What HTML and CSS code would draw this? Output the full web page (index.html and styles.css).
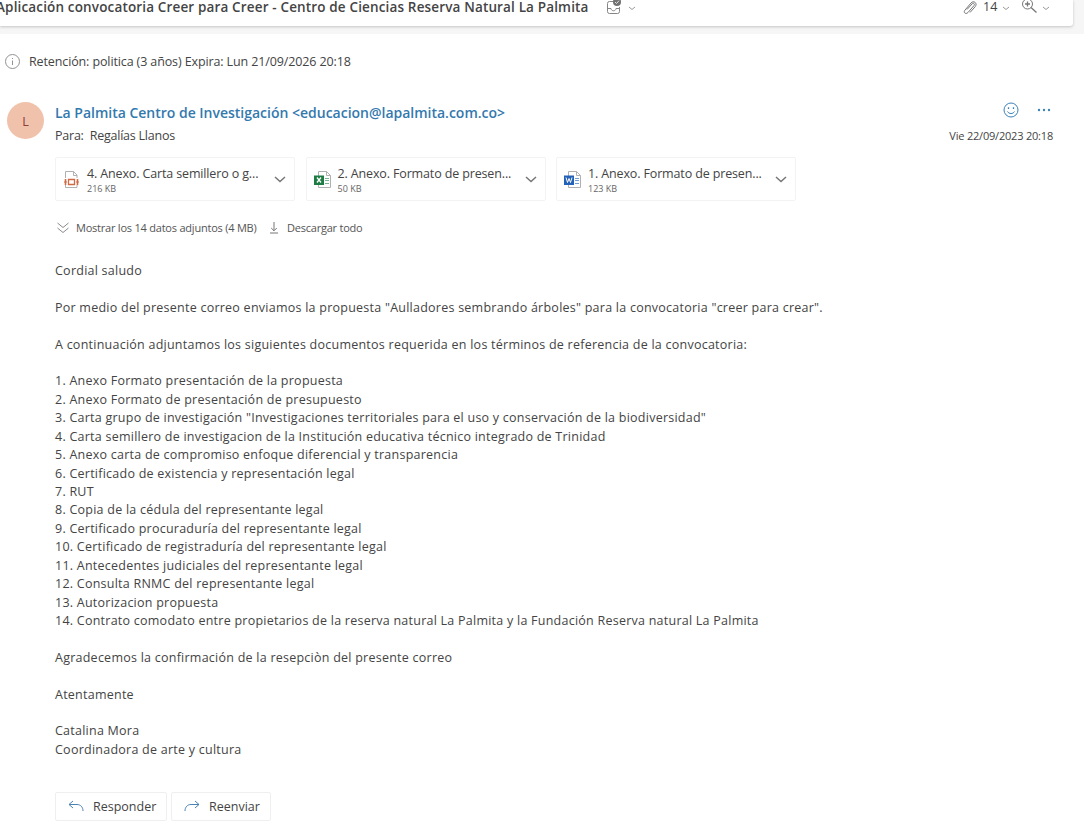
FILE: index.html
```html
<!DOCTYPE html>
<html lang="es">
<head>
    <meta charset="UTF-8">
    <meta name="viewport" content="width=device-width, initial-scale=1.0">
    <title>Aplicación convocatoria Creer para Creer</title>
    <link rel="stylesheet" href="styles.css">
</head>
<body>

    <header class="subject-bar">
        <h1 class="subject">Aplicación convocatoria Creer para Creer - Centro de Ciencias Reserva Natural La Palmita</h1>
        <svg class="inbox" width="16" height="18" viewBox="0 0 16 18" fill="none" stroke="#858585">
            <path d="M7 3.5H3.5a2 2 0 0 0-2 2v8a2 2 0 0 0 2 2h8a2 2 0 0 0 2-2V9M1.5 10.5h3.500c.3 3 4.700 3 5 0h3.500"/>
            <circle cx="11" cy="4" r="4" fill="#707070" stroke="none"/>
            <path d="M9 4l1.500 1.500L13 2.700" stroke="#ddd"/>
        </svg>
        <svg class="chev" width="8" height="5" viewBox="0 0 8 5"><path d="M1 1l3 2.500L7 1"/></svg>
        <div class="tools">
            <svg width="14" height="16" viewBox="0 0 14 16" fill="none" stroke="#777">
                <path d="M4 9.500l5-5.500c1.500-1.600 3.200 0 2 1.500l-6 7c-2 2.200-5 .2-3.200-2.200L8 3c2.700-3 6.800.2 4.300 3.500L7 12.500"/>
            </svg>
            <span class="count">14</span>
            <svg class="chev" width="8" height="5" viewBox="0 0 8 5"><path d="M1 1l3 2.500L7 1"/></svg>
            <svg class="zoom" width="17" height="16" viewBox="0 0 17 16" fill="none" stroke="#777">
                <circle cx="6.500" cy="6" r="5"/>
                <path d="M4 6h5M6.500 3.500v5M10 9.500l5.500 5" stroke-width="1.300"/>
            </svg>
            <svg class="chev" width="8" height="5" viewBox="0 0 8 5"><path d="M1 1l3 2.500L7 1"/></svg>
        </div>
    </header>

    <main class="message">
        <div class="retention">
            <svg width="16" height="16" viewBox="0 0 16 16" fill="none" stroke="#929292">
                <circle cx="7.500" cy="7.500" r="7"/>
                <path d="M7.500 6.500v4.500M7.500 4v1"/>
            </svg>
            <span>Retención: politica (3 años) Expira: Lun 21/09/2026 20:18</span>
        </div>

        <section class="sender">
            <div class="avatar">L</div>
            <div class="who">
                <h2 class="from">La Palmita Centro de Investigación &lt;educacion@lapalmita.com.co&gt;</h2>
                <p class="to">Para:&nbsp; Regalías Llanos</p>
            </div>
            <div class="meta">
                <div class="actions">
                    <svg width="16" height="16" viewBox="0 0 16 16" fill="none" stroke="#3d83b8">
                        <circle cx="8" cy="8" r="7"/>
                        <path d="M4.500 9.500c1.500 2.700 5.500 2.700 7 0"/>
                        <path d="M5.500 5.200v1.800M10.500 5.200v1.800" stroke-width="1.300"/>
                    </svg>
                    <svg width="14" height="4" viewBox="0 0 14 4" fill="#3d83b8">
                        <circle cx="2" cy="2" r="1.200"/><circle cx="7" cy="2" r="1.200"/><circle cx="12" cy="2" r="1.200"/>
                    </svg>
                </div>
                <p class="date">Vie 22/09/2023 20:18</p>
            </div>
        </section>

        <div class="files">
            <div class="file">
                <svg width="18" height="20" viewBox="0 0 18 20" fill="none">
                    <path d="M2.500 9V2.500h8l3.500 3.500v3M10.500 2.500v4h3.500M2.500 16v2.500h11.500V16" stroke="#b0b0b0"/>
                    <path d="M2.500 10v6M14.500 10v6" stroke="#cf6a45" stroke-width="1.600"/>
                    <path d="M5.500 10.500h6v5h-6z" stroke="#cf6a45" stroke-width="1.300"/>
                    <path d="M1 13h3M13 13h3" stroke="#cf6a45"/>
                </svg>
                <div class="file-text">
                    <p class="name">4. Anexo. Carta semillero o g...</p>
                    <p class="size">216 KB</p>
                </div>
                <svg class="down" width="14" height="9" viewBox="0 0 14 9"><path d="M2 2l5 4.500L12 2"/></svg>
            </div>
            <div class="file">
                <svg width="18" height="20" viewBox="0 0 18 20" fill="none">
                    <path d="M4.500 2.500h8l4 4v12h-12zM12.500 2.500v4h4" stroke="#b0b0b0"/>
                    <path d="M11 9.500h4M11 11.500h4M11 14.500h4" stroke="#74b68d"/>
                    <rect x="0" y="6.500" width="10" height="9.500" fill="#1d7c43"/>
                    <path d="M3 8.500l4 5M7 8.500l-4 5" stroke="#fff" stroke-width="1.300"/>
                </svg>
                <div class="file-text">
                    <p class="name">2. Anexo. Formato de presen...</p>
                    <p class="size">50 KB</p>
                </div>
                <svg class="down" width="14" height="9" viewBox="0 0 14 9"><path d="M2 2l5 4.500L12 2"/></svg>
            </div>
            <div class="file">
                <svg width="18" height="20" viewBox="0 0 18 20" fill="none">
                    <path d="M4.500 2.500h8l4 4v12h-12zM12.500 2.500v4h4" stroke="#b0b0b0"/>
                    <path d="M11 9.500h4M11 11.500h4M11 14.500h4" stroke="#6f9fd8"/>
                    <rect x="0" y="6.500" width="10" height="9.500" fill="#2461b8"/>
                    <path d="M2 8.500l1.500 5L5 9.500l1.500 4 1.500-5" stroke="#fff"/>
                </svg>
                <div class="file-text">
                    <p class="name">1. Anexo. Formato de presen...</p>
                    <p class="size">123 KB</p>
                </div>
                <svg class="down" width="14" height="9" viewBox="0 0 14 9"><path d="M2 2l5 4.500L12 2"/></svg>
            </div>
        </div>

        <div class="file-links">
            <svg width="12" height="12" viewBox="0 0 12 12" fill="none" stroke="#8a8a8a"><path d="M.5 1L6 5.500 11.500 1M.5 6L6 10.500 11.500 6"/></svg>
            <span class="show-all">Mostrar los 14 datos adjuntos (4 MB)</span>
            <svg width="8" height="12" viewBox="0 0 8 12" fill="none" stroke="#777"><path d="M4 0v8.500M1.200 6L4 8.800 6.800 6M0 11h8"/></svg>
            <span class="download">Descargar todo</span>
        </div>

        <article class="content">
            <p>Cordial saludo</p>
            <p>Por medio del presente correo enviamos la propuesta "Aulladores sembrando árboles" para la convocatoria "creer para crear".</p>
            <p>A continuación adjuntamos los siguientes documentos requerida en los términos de referencia de la convocatoria:</p>
            <p>
                1. Anexo Formato presentación de la propuesta<br>
                2. Anexo Formato de presentación de presupuesto<br>
                3. Carta grupo de investigación "Investigaciones territoriales para el uso y conservación de la biodiversidad"<br>
                4. Carta semillero de investigacion de la Institución educativa técnico integrado de Trinidad<br>
                5. Anexo carta de compromiso enfoque diferencial y transparencia<br>
                6. Certificado de existencia y representación legal<br>
                7. RUT<br>
                8. Copia de la cédula del representante legal<br>
                9. Certificado procuraduría del representante legal<br>
                10. Certificado de registraduría del representante legal<br>
                11. Antecedentes judiciales del representante legal<br>
                12. Consulta RNMC del representante legal<br>
                13. Autorizacion propuesta<br>
                14. Contrato comodato entre propietarios de la reserva natural La Palmita y la Fundación Reserva natural La Palmita
            </p>
            <p>Agradecemos la confirmación de la resepciòn del presente correo</p>
            <p>Atentamente</p>
            <p>
                Catalina Mora<br>
                Coordinadora de arte y cultura
            </p>
        </article>

        <div class="buttons">
            <button class="btn">
                <svg width="16" height="12" viewBox="0 0 16 12"><path d="M5 1L1 4.500 5 8M1 4.500h8c3.500 0 6 2.500 6 6.500"/></svg>
                Responder
            </button>
            <button class="btn forward">
                <svg width="16" height="12" viewBox="0 0 16 12"><path d="M11 1l4 3.500L11 8M15 4.500H7c-3.500 0-6 2.500-6 6.500"/></svg>
                Reenviar
            </button>
        </div>
    </main>

</body>
</html>
```
FILE: styles.css
```css
* {
    box-sizing: border-box;
}

body {
    margin: 0;
    height: 826px;
    overflow: hidden;
    background-color: #f7f6f6;
    font-family: "Open Sans", "Noto Sans", sans-serif;
    font-size: 12.5px;
    color: #444;
}

h1, h2, p {
    margin: 0;
    white-space: nowrap;
}

svg {
    flex: none;
}

.subject-bar {
    display: flex;
    align-items: flex-start;
    width: 1073px;
    height: 26px;
    background-color: #fff;
    border-radius: 0 0 3px 0;
    box-shadow: 0 1px 3px #c4c4c4;
}

.subject {
    width: 606px;
    margin-left: -4px;
    font-size: 13.5px;
    font-weight: 600;
    line-height: 14px;
    letter-spacing: 0.15px;
}

.inbox {
    margin: -2px 6px 0 4px;
}

.chev {
    margin-top: 6px;
    fill: none;
    stroke: #999;
}

.tools {
    display: flex;
    align-items: flex-start;
    margin-left: auto;
    padding-right: 23px;
}

.count {
    width: 19px;
    margin-left: 6px;
    font-size: 12.5px;
    line-height: 13px;
}

.zoom {
    margin: -2px 4px 0 11px;
}

.message {
    height: 793px;
    margin-top: 8px;
    background-color: #fff;
}

.retention {
    display: flex;
    align-items: center;
    gap: 8px;
    height: 55px;
    padding-left: 5px;
    letter-spacing: -0.12px;
    white-space: nowrap;
}

.sender {
    display: flex;
    height: 68px;
    padding: 13px 31px 0 7px;
}

.avatar {
    width: 37px;
    height: 37px;
    border-radius: 50%;
    background-color: #f1c2ab;
    color: #8b4038;
    line-height: 39px;
    text-align: center;
}

.who {
    padding-left: 11px;
}

.from {
    font-size: 14px;
    font-weight: 600;
    line-height: 22px;
    letter-spacing: -0.01px;
    color: #3379ae;
}

.to {
    line-height: 23px;
    letter-spacing: -0.23px;
}

.meta {
    margin-left: auto;
}

.actions {
    display: flex;
    align-items: center;
    justify-content: flex-end;
    gap: 18px;
    height: 16px;
    padding-right: 2px;
}

.date {
    margin-top: 9px;
    font-size: 11px;
    line-height: 18px;
    letter-spacing: -0.2px;
}

.files {
    display: flex;
    gap: 10.5px;
    padding-left: 55px;
}

.file {
    display: flex;
    align-items: center;
    width: 240px;
    height: 44px;
    padding: 0 7px;
    border: 1px solid #f3f3f3;
    border-radius: 2px;
}

.file-text {
    padding: 2px 0 0 6px;
}

.name {
    font-size: 12.5px;
    line-height: 17px;
    letter-spacing: -0.14px;
}

.size {
    font-size: 9px;
    line-height: 13px;
    color: #666;
}

.down {
    margin-left: auto;
    fill: none;
    stroke: #777;
    stroke-width: 1.5;
}

.file-links {
    display: flex;
    align-items: center;
    height: 53px;
    padding-left: 57px;
    font-size: 11px;
    letter-spacing: -0.22px;
    color: #555;
    white-space: nowrap;
}

.show-all {
    width: 201px;
    padding-left: 7px;
}

.download {
    padding-left: 9px;
}

.content {
    padding: 8px 0 0 55px;
    line-height: 18.42px;
    letter-spacing: 0.245px;
}

.content p {
    margin-bottom: 18.42px;
}

.buttons {
    display: flex;
    gap: 4px;
    padding: 14px 0 0 55px;
}

.btn {
    display: flex;
    align-items: center;
    gap: 9px;
    width: 112px;
    height: 29px;
    padding: 0 0 0 12px;
    border: 1px solid #efefef;
    border-radius: 2px;
    background-color: #fff;
    color: #444;
    font-family: inherit;
    font-size: 12.5px;
}

.forward {
    width: 100px;
}

.btn svg {
    fill: none;
    stroke: #4b82b4;
}
```
